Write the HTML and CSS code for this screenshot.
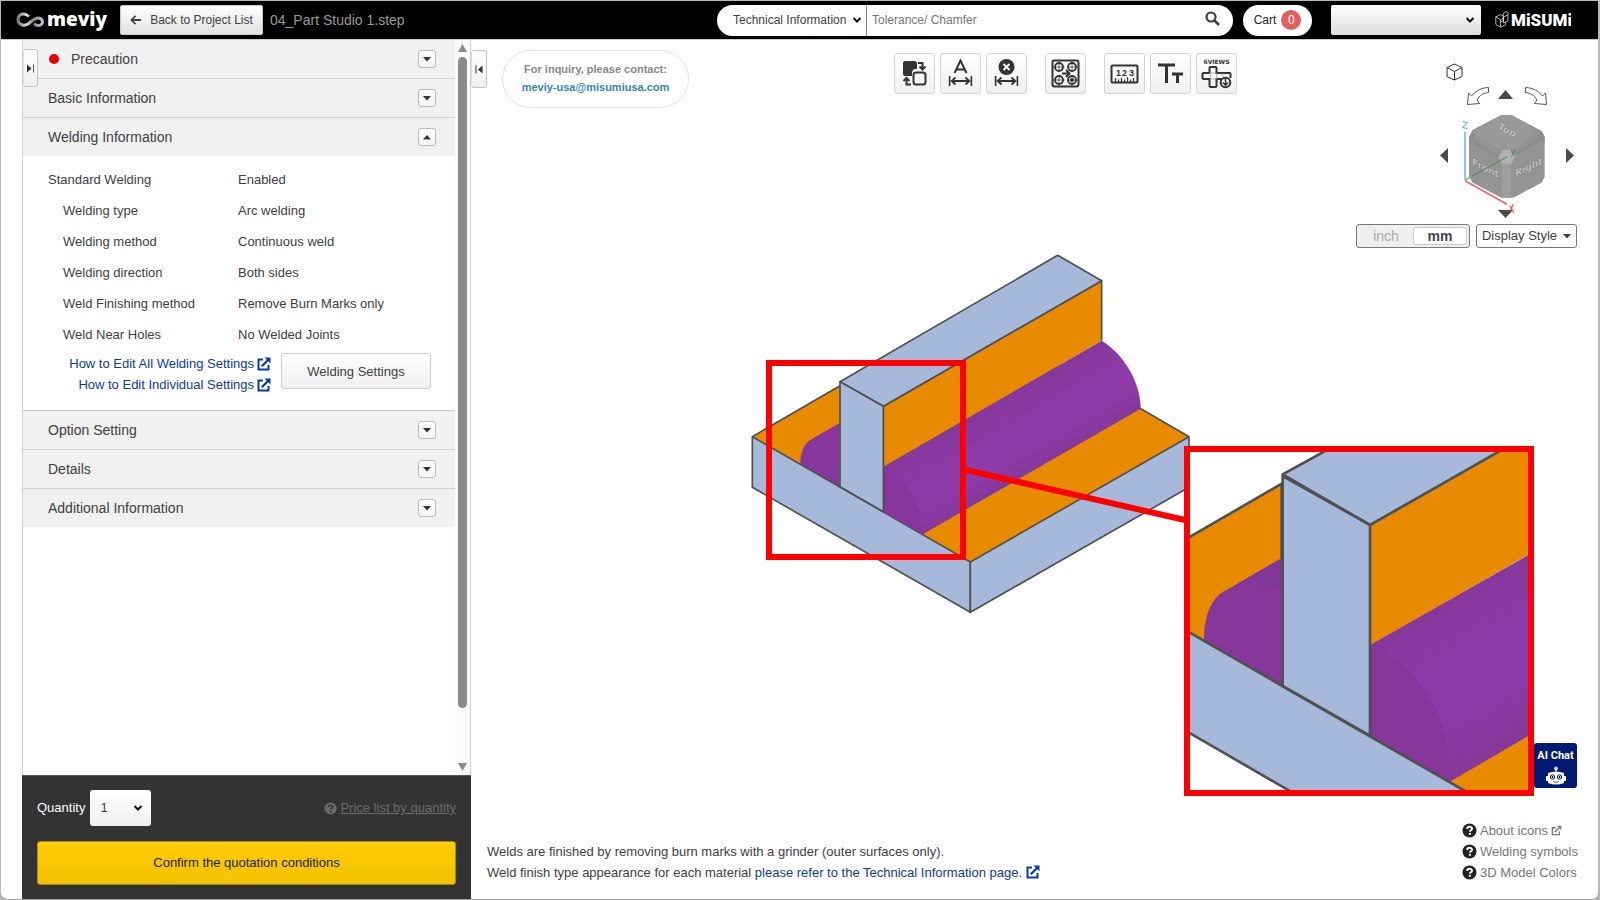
FILE: index.html
```html
<!DOCTYPE html>
<html lang="en">
<head>
<meta charset="utf-8">
<title>meviy - 04_Part Studio 1.step</title>
<link rel="stylesheet" href="styles.css">
</head>
<body>
<svg class="defs" aria-hidden="true">
  <symbol id="ext" viewBox="0 0 14 14"><path d="M6 2.5H1.5v10h10V8" fill="none" stroke="currentColor" stroke-width="2"/><path d="M4.8 9.2L11 3" fill="none" stroke="currentColor" stroke-width="2.2"/><path d="M7.5 0.5h6v6z" fill="currentColor"/></symbol>
  <symbol id="chev" viewBox="0 0 10 8"><path d="M1.5 2l3.5 3.5L8.500 2" fill="none" stroke="currentColor" stroke-width="2"/></symbol>
  <symbol id="down" viewBox="0 0 8 5"><path d="M0 0h8L4 4.500z" fill="currentColor"/></symbol>
  <symbol id="up" viewBox="0 0 8 5"><path d="M0 4.500h8L4 0z" fill="currentColor"/></symbol>
  <symbol id="help" viewBox="0 0 16 16"><circle cx="8" cy="8" r="7.500" fill="currentColor"/><path class="help-mark" d="M5.500 6.400c0-3.200 5.200-3 5.200-.3 0 1.700-2.300 1.600-2.300 3.200" fill="none" stroke-width="2"/><rect class="help-dot" x="7.300" y="10.600" width="2.100" height="2"/></symbol>
  <symbol id="dim" viewBox="0 0 24 10"><path d="M1 0v10M23 0v10M3 5h18M7 1.500L3.200 5 7 8.500M17 1.500L20.800 5 17 8.500" fill="none" stroke="currentColor" stroke-width="1.800"/></symbol>
</svg>
<div class="window">
  <header class="topbar">
    <svg class="logo" viewBox="0 0 94 30" role="img" aria-label="meviy">
      <defs><linearGradient id="lg" x1="0" x2="1"><stop offset="0" stop-color="#777"/><stop offset=".35" stop-color="#ddd"/><stop offset=".6" stop-color="#888"/><stop offset="1" stop-color="#bbb"/></linearGradient></defs>
      <path d="M14 11.500C9 7 3 9 3 14.500s6 7 10 4.500c4-2.500 6-6 10-6 4.500 0 6 5 2.500 7-2.500 1.200-5 0-6.500-1.500" fill="none" stroke="url(#lg)" stroke-width="3"/>
      <text class="logo-text" x="32" y="21">meviy</text>
    </svg>
    <button class="back" type="button"><svg width="12" height="10" viewBox="0 0 12 10"><path d="M5.500 .8L1.500 5l4 4.200M1.500 5H11" fill="none" stroke="currentColor" stroke-width="1.800"/></svg>Back to Project List</button>
    <h1 class="title">04_Part Studio 1.step</h1>
    <form class="search">
      <label class="pick scope"><select aria-label="Search category"><option>Technical Information</option></select><svg><use href="#chev"/></svg></label>
      <input type="text" placeholder="Tolerance/ Chamfer" aria-label="Search">
      <button type="button" aria-label="Search"><svg width="16" height="16" viewBox="0 0 16 16"><circle cx="6" cy="6" r="4.500" fill="none" stroke="currentColor" stroke-width="2.200"/><path d="M9.500 9.500l4.500 4.500" stroke="currentColor" stroke-width="2.600"/></svg></button>
    </form>
    <button class="cart" type="button">Cart <span>0</span></button>
    <label class="pick user"><select aria-label="Account"><option></option></select><svg><use href="#chev"/></svg></label>
    <svg class="misumi" viewBox="0 0 76 20" role="img" aria-label="MiSUMi">
      <path d="M.8 6.800l5-2.200 2.500 1.500v4.500l-3 1.500M.8 6.800v7.500l4.800 3 5-2.500V12M.8 6.800l4.700 3v7M5.500 9.800L8 8.500M8.300 3.500L11 1.500l2 1.200v8L8.500 13V7l4.500-2M8.300 3.500v7" fill="none" stroke="#ddd" stroke-width=".8"/>
      <text class="misumi-text" x="16" y="16">MiSUMi</text>
    </svg>
  </header>

  <div class="main">
    <aside class="panel">
      <button class="tab" type="button" aria-label="Collapse panel"><svg width="8" height="9" viewBox="0 0 8 9"><path d="M0 .5l4.500 4L0 8.500z" fill="#333"/><path d="M6.500 .5v8" stroke="#555"/></svg></button>
      <div class="scroll">
        <div class="sections">
          <h2 class="sec"><span class="dot"></span>Precaution<button type="button" aria-label="Expand"><svg><use href="#down"/></svg></button></h2>
          <h2 class="sec">Basic Information<button type="button" aria-label="Expand"><svg><use href="#down"/></svg></button></h2>
          <h2 class="sec open">Welding Information<button type="button" aria-label="Collapse"><svg><use href="#up"/></svg></button></h2>
          <div class="weld">
            <dl>
              <dt class="lead">Standard Welding</dt><dd>Enabled</dd>
              <dt>Welding type</dt><dd>Arc welding</dd>
              <dt>Welding method</dt><dd>Continuous weld</dd>
              <dt>Welding direction</dt><dd>Both sides</dd>
              <dt>Weld Finishing method</dt><dd>Remove Burn Marks only</dd>
              <dt>Weld Near Holes</dt><dd>No Welded Joints</dd>
            </dl>
            <div class="actions">
              <div class="links">
                <a href="#">How to Edit All Welding Settings<svg class="ext"><use href="#ext"/></svg></a>
                <a href="#">How to Edit Individual Settings<svg class="ext"><use href="#ext"/></svg></a>
              </div>
              <button type="button">Welding Settings</button>
            </div>
          </div>
          <h2 class="sec ruled">Option Setting<button type="button" aria-label="Expand"><svg><use href="#down"/></svg></button></h2>
          <h2 class="sec">Details<button type="button" aria-label="Expand"><svg><use href="#down"/></svg></button></h2>
          <h2 class="sec open">Additional Information<button type="button" aria-label="Expand"><svg><use href="#down"/></svg></button></h2>
        </div>
        <div class="bar" aria-hidden="true">
          <svg viewBox="0 0 9 8"><path d="M4.500 0L9 8H0z"/></svg><i></i><svg class="bar-end" viewBox="0 0 9 8"><path d="M0 0h9L4.500 8z"/></svg>
        </div>
      </div>
      <div class="order">
        <div class="qty">
          <label for="qty">Quantity</label>
          <span class="pick count"><select id="qty"><option>1</option></select><svg><use href="#chev"/></svg></span>
          <a href="#"><svg class="help"><use href="#help"/></svg><span>Price list by quantity</span></a>
        </div>
        <button class="confirm" type="button">Confirm the quotation conditions</button>
      </div>
    </aside>

    <main class="viewer">
      <button class="tab right" type="button" aria-label="Expand viewer"><svg width="8" height="9" viewBox="0 0 8 9"><path d="M7.500 .5L3 4.500l4.500 4z" fill="#333"/><path d="M1 .5v8" stroke="#333"/></svg></button>

      <div class="tools">
        <div class="inquiry">For inquiry, please contact:<a href="mailto:meviy-usa@misumiusa.com">meviy-usa@misumiusa.com</a></div>
        <div class="toolbar">
          <div class="group">
            <button type="button" aria-label="Swap faces"><svg viewBox="0 0 41 41"><path d="M11 8h9a3 3 0 0 1 3 3v5h-2a4 4 0 0 0-3 3v4h-7a2 2 0 0 1-2-2V10a2 2 0 0 1 2-2z" fill="currentColor"/><rect x="19.500" y="19.500" width="12" height="12" rx="2.500" fill="none" stroke="currentColor" stroke-width="2"/><path d="M24 10h4.500v6M25.500 13.500l3 3 3-3M17 31.500h-4.500v-6M9.500 28l3-3 3 3" fill="none" stroke="currentColor" stroke-width="2"/></svg></button>
            <button type="button" aria-label="Add dimension"><svg viewBox="0 0 41 41"><path d="M14.500 20L20.500 7.500 26.500 20M16.500 16.500h8" fill="none" stroke="currentColor" stroke-width="2"/><use href="#dim" x="8.500" y="23" width="24" height="10"/></svg></button>
            <button type="button" aria-label="Remove dimension"><svg viewBox="0 0 41 41"><circle cx="20.500" cy="14" r="8" fill="currentColor"/><path d="M17.500 11l6 6M23.500 11l-6 6" stroke="#fff" stroke-width="1.800"/><use href="#dim" x="8.500" y="23" width="24" height="10"/></svg></button>
          </div>
          <div class="group">
            <button type="button" aria-label="Hole pattern"><svg viewBox="0 0 41 41"><g fill="none" stroke="currentColor"><rect x="7.500" y="7.500" width="26" height="26" rx="2" stroke-width="2"/><g stroke-width="1.800"><circle cx="14" cy="14" r="4"/><circle cx="27" cy="14" r="4"/><circle cx="14" cy="27" r="4"/><circle cx="27" cy="27" r="4"/></g><path d="M14 8v11M8.500 14h11M27 8v11M22 14h11M14 22v11M8.500 27h11M27 22v11M22 27h11" stroke-width=".7"/><path d="M17 20.500h7M21 17l3.500 3.500L21 24" stroke-width="2"/></g><circle cx="27" cy="27" r="2" fill="currentColor"/></svg></button>
          </div>
          <div class="group">
            <button type="button" aria-label="Measure"><svg viewBox="0 0 41 41"><rect x="7.500" y="12.500" width="26" height="17" rx="1" fill="none" stroke="currentColor" stroke-width="2"/><path d="M11.500 29v-4M14.500 29v-2.500M17.500 29v-4M20.500 29v-2.500M23.500 29v-5M26.500 29v-2.500M29.500 29v-4" stroke="currentColor" stroke-width="1.200"/><text class="digits" x="12" y="23">1</text><text class="digits" x="18" y="23">2</text><text class="digits" x="25" y="23">3</text></svg></button>
            <button type="button" aria-label="Text"><svg viewBox="0 0 41 41"><path d="M8 12h17M16.500 12v18M22 21h11M27.500 21v9" stroke="currentColor" stroke-width="3" fill="none"/></svg></button>
            <button type="button" aria-label="Six views"><svg viewBox="0 0 41 41"><text class="views" x="20.500" y="11">6VIEWS</text><path d="M13.500 20v-5a1 1 0 0 1 1-1h5a1 1 0 0 1 1 1v5h13a1 1 0 0 1 1 1v4M13.500 20h-6a1 1 0 0 0-1 1v4a1 1 0 0 0 1 1h6v7a1 1 0 0 0 1 1h5a1 1 0 0 0 1-1v-7h5" fill="none" stroke="currentColor" stroke-width="2"/><path d="M14.500 20h6v6h-6zM27 20v5" fill="none" stroke="#999" stroke-width=".7"/><circle cx="29.500" cy="29.500" r="4.800" fill="#fff" stroke="currentColor" stroke-width="2"/><path d="M29.500 25v7M26.800 29.500l2.700 2.700 2.700-2.700" fill="none" stroke="currentColor" stroke-width="1.600"/></svg></button>
          </div>
        </div>

        <div class="orient">
          <div class="cube">
            <svg class="cube-art" viewBox="48 36 663 465" role="img" aria-label="View cube: Top, Front, Right">
              <path d="M375 390V245" stroke="#7db7f2" stroke-width="5"/>
              <path d="M484 195h31l90 48 9 17v120l-9 18-85 45h-36l-86-45-11-18V262l11-22z" fill="#949494"/>
              <path d="M484 195h31l75 45-15 22-58 38h-34l-70-42-15-18z" fill="#999"/>
              <path d="M398 240l12 35 70 42v10l-83-48-10 2V262zM605 243l-15 25-70 42v10l85-48 9 8V260z" fill="#8d8d8d"/>
              <path d="M486 335h27v108h-27z" fill="#9e9e9e"/>
              <path d="M488 300h24l13 20-12 22h-26l-11-22z" fill="#b0b0b0"/>
              <text class="face" transform="matrix(.9 .45 -.35 .9 472 236)">Top</text>
              <text class="face" transform="matrix(.9 .45 0 1 396 344)">Front</text>
              <text class="face" transform="matrix(.9 -.45 0 1 526 382)">Right</text>
              <path d="M375 390l127-70" stroke="#4a8f55" stroke-width="3"/><path d="M375 390l20-11" stroke="#4ed36b" stroke-width="4"/>
              <path d="M375 392l126 71" stroke="#f26464" stroke-width="5"/>
              <path d="M368 215l14 3-14 15 15 3" fill="none" stroke="#7db7f2" stroke-width="4"/>
              <path d="M513 300l5 10M526 296l-11 23" fill="none" stroke="#4a8f55" stroke-width="3"/>
            </svg>
            <button class="c-home" type="button" aria-label="Isometric"><svg width="17" height="18" viewBox="0 0 17 18"><path d="M8.500 1L16 4.500v9L8.500 17 1 13.500v-9zM1 4.500L8.500 8.500 16 4.500M8.500 8.500V17" fill="none" stroke="#333"/></svg></button>
            <button class="c-ccw" type="button" aria-label="Rotate left"><svg width="22" height="18" viewBox="0 0 22 18"><path d="M21.500 .5v5C16 6 12.500 8.500 10 13l2.500 3.500L.5 17.500 1.500 6l3 3C8.500 4 14 .8 21.500 .5z" fill="#fff" stroke="#555"/></svg></button>
            <button class="c-up" type="button" aria-label="Rotate up"><svg width="15" height="9" viewBox="0 0 15 9"><path d="M0 9h15L7.500 0z"/></svg></button>
            <button class="c-cw" type="button" aria-label="Rotate right"><svg width="22" height="18" viewBox="0 0 22 18"><path d="M.5 .5v5C6 6 9.500 8.500 12 13l-2.500 3.500 12 1L20.500 6l-3 3C13.500 4 8 .8 .5 .5z" fill="#fff" stroke="#555"/></svg></button>
            <button class="c-left" type="button" aria-label="Turn left"><svg width="8" height="15" viewBox="0 0 8 15"><path d="M8 0v15L0 7.500z"/></svg></button>
            <button class="c-right" type="button" aria-label="Turn right"><svg width="8" height="15" viewBox="0 0 8 15"><path d="M0 0v15l8-7.500z"/></svg></button>
            <button class="c-down" type="button" aria-label="Rotate down"><svg width="15" height="9" viewBox="0 0 15 9"><path d="M0 0h15L7.500 8z"/></svg></button>
            <svg class="c-x" viewBox="0 0 6 10"><path d="M1 1.500L5 9M4.500 0L1 7" stroke="#f25555" stroke-width="1.200"/></svg>
          </div>
          <div class="display">
            <div class="units"><button type="button">inch</button><button class="on" type="button">mm</button></div>
            <button class="style" type="button">Display Style<svg><use href="#down"/></svg></button>
          </div>
        </div>
      </div>

      <svg class="model" viewBox="0 0 2400 1680" role="img" aria-label="Welded part with enlarged detail">
        <defs>
          <linearGradient id="bead" gradientUnits="userSpaceOnUse" x1="760" y1="500" x2="870" y2="690"><stop offset="0" stop-color="#87389c"/><stop offset=".4" stop-color="#8d3ba9"/><stop offset=".75" stop-color="#8d3ba9"/><stop offset="1" stop-color="#86389b"/></linearGradient>
          <linearGradient id="bead2" gradientUnits="userSpaceOnUse" x1="790" y1="540" x2="1010" y2="930"><stop offset="0" stop-color="#87389c"/><stop offset=".35" stop-color="#8d3ba9"/><stop offset=".7" stop-color="#8d3ba9"/><stop offset="1" stop-color="#86389b"/></linearGradient>
          <clipPath id="inset"><path d="M60 66h1015v1014H60z"/></clipPath>
        </defs>
        <g class="edges">
          <path class="orange" d="M37 590L300 437 900 340 1200 505 1347 590 691 966z" stroke="none"/>
          <path class="purple" d="M298 550L215 597C190 612 181 640 181 672L298 740z"/>
          <path class="blue" d="M37 590L691 966V1117L37 742z"/>
          <path class="blue" d="M691 966L1347 590V742L691 1117z"/>
          <path d="M37 590L300 437M1200 505L1347 590"/>
          <path class="orange" d="M430 499L1085 122V302L430 680z" stroke="none"/>
          <path d="M430 680V499L1085 122V302"/>
          <path fill="url(#bead)" stroke="none" d="M430 680L1085 302C1155 345 1202 430 1202 506L550 882 430 815z"/>
          <path class="purple" d="M430 680C505 720 550 800 547 882L430 815z"/>
          <path class="blue" d="M300 425L953 46 1085 122 430 499z"/>
          <path class="blue" d="M300 425L430 499V815L300 740z"/>
        </g>
        <path class="mark" d="M87 369h582v582H87zM678 690L1335 840"/>
        <g transform="translate(1290 570)">
          <path d="M51 57h1032v1032H51z" fill="#fff"/>
          <g class="edges inset" clip-path="url(#inset)">
            <path class="orange" d="M40 332L335 161V770L40 600z"/>
            <path class="purple" d="M338 383L155 488C115 515 100 580 102 634L338 770z"/>
            <path class="shade" d="M338 383L200 463Q270 465 338 480z"/>
            <path class="orange" d="M602 285L1100 0V360L602 645z" stroke="none"/>
            <path fill="url(#bead2)" stroke="none" d="M600 645L1090 366V910L845 1062 600 917z"/>
            <path class="purple" d="M600 645C760 710 850 880 838 1060L600 917z"/>
            <path class="orange" d="M842 1054L1090 909V1120H842z" stroke="none"/>
            <path class="blue" d="M40 597L932 1110V1206H572L40 898z"/>
            <path class="blue" d="M338 133L580 0H1100L600 285z"/>
            <path class="blue" d="M338 138L600 285V917L338 768z"/>
          </g>
          <path class="mark" d="M51 57h1032v1032H51z"/>
        </g>
      </svg>

      <button class="chat" type="button">AI Chat<svg width="22" height="19" viewBox="0 0 22 19"><circle cx="11" cy="2.500" r="2" fill="#ccd"/><path d="M10.500 3h1v4h-1zM3 7q8-3 16 0v10q-8 3-16 0zM1 10h2v5H1zM19 10h2v5h-2z" fill="#fff"/><circle cx="7.500" cy="11" r="2.200" fill="none" stroke="#001973"/><circle cx="14.500" cy="11" r="2.200" fill="none" stroke="#001973"/><circle cx="7.500" cy="11" r=".9"/><circle cx="14.500" cy="11" r=".9"/><path d="M8 15.500q3 1.500 6 0" fill="none" stroke="#667"/></svg></button>

      <div class="foot">
        <p>Welds are finished by removing burn marks with a grinder (outer surfaces only).<br>Weld finish type appearance for each material <a href="#">please refer to the Technical Information page. <svg class="ext"><use href="#ext"/></svg></a></p>
        <nav>
          <a href="#"><svg class="help"><use href="#help"/></svg>About icons<svg class="ext small" viewBox="0 0 12 12"><path d="M5 3H1.500v7.500H9V7M4 8l6.500-6.500M7 1.500h3.500V5" fill="none" stroke="currentColor" stroke-width="1.500"/></svg></a>
          <a href="#"><svg class="help"><use href="#help"/></svg>Welding symbols</a>
          <a href="#"><svg class="help"><use href="#help"/></svg>3D Model Colors</a>
        </nav>
      </div>
    </main>
  </div>
</div>
</body>
</html>
```
FILE: styles.css
```css
* { box-sizing: border-box; }
body { margin: 0; background: #b4b4b4; font: 13px/20px "Liberation Sans", Arial, sans-serif; color: #404040; }
button, input, select { font: inherit; color: inherit; margin: 0; }
button { padding: 0; cursor: pointer; }
a { color: #0b3ba0; text-decoration: none; }
h1, h2, p, dl, dd { margin: 0; font-weight: normal; }
svg { display: block; flex: none; }
.defs { position: absolute; width: 0; height: 0; }

.window { display: flex; flex-direction: column; min-height: 100vh; background: #fff; border: 1px solid #b8b8b8; border-right-width: 2px; border-bottom-color: #a0a0a0; border-radius: 0 0 8px 8px; overflow: hidden; }

.topbar { display: flex; align-items: center; height: 38px; padding: 0 27px 0 14px; background: #000; font-size: 12px; }
.logo { width: 94px; height: 30px; }
.logo-text { font: 800 19px "Open Sans", sans-serif; fill: #fff; }
.back { display: flex; align-items: center; justify-content: center; gap: 8px; width: 143px; height: 30px; margin-left: 11px; background: linear-gradient(#fff, #e2e2e2); border: 1px solid #ccc; border-radius: 2px; }
.title { margin-left: 7px; font-size: 14px; color: #999; }
.search { display: flex; width: 516px; height: 31px; margin-left: auto; background: #fff; border-radius: 16px; overflow: hidden; }
.search input { flex: 1; min-width: 0; border: 0; border-left: 1px solid #888; padding: 0 5px; outline: 0; }
.search input::placeholder { color: #777; opacity: 1; }
.search button { width: 41px; padding: 0 0 3px 13px; border: 0; background: none; }
.pick { position: relative; display: flex; }
.pick select { width: 100%; appearance: none; border: 0; border-radius: 2px; background: none; }
.pick svg { position: absolute; right: 4px; top: calc(50% - 4px); width: 10px; height: 8px; color: #111; pointer-events: none; }
.scope { width: 149px; }
.scope select { padding: 0 16px; }
.cart { display: flex; align-items: center; justify-content: center; gap: 5px; width: 69px; height: 31px; margin-left: 10px; background: #fff; border: 0; border-radius: 16px; color: #222; }
.cart span { width: 20px; height: 20px; border-radius: 50%; background: #e06060; color: #fff; }
.user { width: 150px; height: 30px; margin-left: 19px; }
.user select { background: linear-gradient(#fff, #dcdcdc); }
.user svg { right: 6px; }
.misumi { width: 76px; height: 20px; margin-left: 14px; }
.misumi-text { font: 900 17px Roboto, sans-serif; fill: #fff; }

.main { flex: 1; display: flex; border-top: 1px solid #ccc; }
.panel { position: relative; display: flex; flex-direction: column; width: 449px; margin-left: 21px; border-left: 1px solid #d0d0d0; flex: none; }
.tab { position: absolute; left: 0; top: 9px; display: flex; align-items: center; justify-content: center; width: 15px; height: 38px; background: linear-gradient(#fff, #f0f0f0); border: 1px solid #c4c4c4; border-left-color: #ddd; border-radius: 3px; }
.tab.right { top: 10px; width: 16px; }
.scroll { flex: 1; display: flex; border-right: 1px solid #d0d0d0; }
.sections { flex: 1; }
.sec { display: flex; align-items: center; height: 39px; padding: 0 19px 0 25px; background: #f1f1f1; border-bottom: 1px solid #d2d2d2; font-size: 14px; }
.sec.open { height: 38px; border-bottom: 0; }
.sec.ruled { height: 40px; border-top: 1px solid #ccc; }
.sec button { display: flex; align-items: center; justify-content: center; width: 18px; height: 18px; margin-left: auto; border: 1px solid #bbb; border-radius: 3px; background: linear-gradient(#fff, #f4f4f4); color: #333; }
.sec button svg { width: 8px; height: 5px; }
.dot { width: 10px; height: 10px; margin: 0 12px 0 1px; border-radius: 50%; background: #e60000; }
.weld { padding: 8px 24px 15px 25px; }
dl { display: grid; grid-template-columns: 190px 1fr; line-height: 31px; }
dt { padding-left: 15px; }
dt.lead { padding-left: 0; }
.actions { display: flex; justify-content: flex-end; gap: 10px; line-height: 21px; padding-top: 3px; }
.links a { display: flex; align-items: center; justify-content: flex-end; gap: 3px; }
.ext { display: inline-block; width: 14px; height: 14px; vertical-align: -2px; }
.actions button { width: 150px; height: 36px; border: 1px solid #ccc; border-radius: 3px; background: linear-gradient(#fff, #f0f0f0); }
.bar { display: flex; flex-direction: column; align-items: center; gap: 5px; width: 15px; padding: 4px 0; background: #fbfbfb; }
.bar svg { width: 9px; height: 8px; fill: #8b8b8b; }
.bar i { width: 9px; height: 651px; border-radius: 5px; background: #8b8b8b; }
.bar .bar-end { margin-top: auto; }
.order { display: flex; flex-direction: column; gap: 15px; margin-left: -1px; padding: 14px 15px; background: #333; border-top: 1px solid #555; }
.qty { display: flex; align-items: center; gap: 5px; color: #fff; }
.count { width: 61px; height: 36px; color: #444; }
.count select { padding: 0 10px; border-radius: 3px; background: linear-gradient(#fff, #f0f0f0); }
.count svg { right: 8px; }
.qty a { display: flex; align-items: center; gap: 3px; margin-left: auto; color: #6b6b6b; }
.qty a span { text-decoration: underline; }
.help { --mark: #fff; width: 15px; height: 15px; }
.help-mark { stroke: var(--mark); }
.help-dot { fill: var(--mark); }
.qty .help { --mark: #333; width: 13px; height: 13px; }
.confirm { height: 44px; border: 1px solid #a88a10; border-radius: 3px; background: linear-gradient(#ffcc05, #f2c200); color: #222; }

.viewer { position: relative; flex: 1; min-width: 0; display: flex; flex-direction: column; }
.tools { display: flex; align-items: flex-start; padding: 0 21px 0 31px; }
.inquiry { width: 187px; height: 58px; margin-top: 10px; padding-top: 9px; border: 1px solid #e2e2e2; border-radius: 29px; text-align: center; font: bold 11px/18px "Liberation Sans", Arial, sans-serif; color: #888; }
.inquiry a { display: block; color: #3a7fc4; }
.toolbar { display: flex; gap: 18px; margin: 13px 0 0 auto; }
.group { display: flex; gap: 5px; }
.group button { width: 41px; height: 41px; border: 1px solid #d4d4d4; border-radius: 3px; background: linear-gradient(#fff, #f0f0f0); color: #333; }
.group svg { width: 41px; height: 41px; margin: -1px; }
.digits { font: bold 9px "Liberation Sans", sans-serif; fill: #333; }
.views { font: bold 6px "DejaVu Sans", sans-serif; fill: #333; text-anchor: middle; }
.orient { width: 221px; margin: 22px 0 0 119px; }
.cube { position: relative; height: 162px; }
.cube-art { width: 221px; height: 155px; }
.cube button { position: absolute; border: 0; background: none; fill: #4a4a4a; }
.face { font: bold 30px "DejaVu Sans", sans-serif; fill: #ccc; stroke: #666; stroke-width: 1px; }
.cube .c-home { left: 90px; top: 1px; }
.cube .c-ccw { left: 111px; top: 25px; }
.cube .c-up { left: 142px; top: 28px; }
.cube .c-cw { left: 169px; top: 25px; }
.cube .c-left { left: 84px; top: 86px; }
.cube .c-right { left: 210px; top: 86px; }
.cube .c-down { left: 142px; top: 148px; }
.c-x { position: absolute; left: 153px; top: 142px; width: 6px; height: 10px; }
.display { display: flex; gap: 6px; }
.units { display: flex; width: 114px; height: 24px; padding: 2px; border: 1px solid #777; border-radius: 3px; background: #efefef; font-size: 14px; line-height: 16px; }
.units button { flex: 1; border: 1px solid transparent; border-radius: 2px; background: none; color: #aaa; }
.units .on { border-color: #ccc; background: #fff; color: #444; font-weight: bold; }
.style { display: flex; flex: 1; align-items: center; justify-content: center; gap: 6px; border: 1px solid #777; border-radius: 3px; background: #fff; }
.style svg { width: 8px; height: 5px; }

.model { position: absolute; left: 269px; top: 200px; width: 800px; height: 560px; pointer-events: none; }
.edges { fill: none; stroke: #505050; stroke-width: 5; stroke-linejoin: round; }
.edges.inset { stroke-width: 8; }
.blue { fill: #a7b9da; }
.orange { fill: #e98b00; }
.purple { fill: #87379c; stroke: none; }
.shade { fill: #81369a; stroke: none; }
.mark { fill: none; stroke: #f00; stroke-width: 18; }

.chat { display: flex; flex-direction: column; align-items: center; width: 43px; height: 45px; margin: auto 21px 0 auto; padding-top: 3px; border: 0; border-radius: 3px; background: #001973; color: #fff; font: bold 11px/20px Roboto, sans-serif; white-space: nowrap; }
.foot { display: flex; justify-content: space-between; align-items: flex-end; padding: 32px 20px 16px 16px; line-height: 21px; }
.foot nav a { display: flex; align-items: center; gap: 3px; color: #777; }
.foot nav .help { color: #222; }
.foot .small { width: 11px; height: 11px; }
```
